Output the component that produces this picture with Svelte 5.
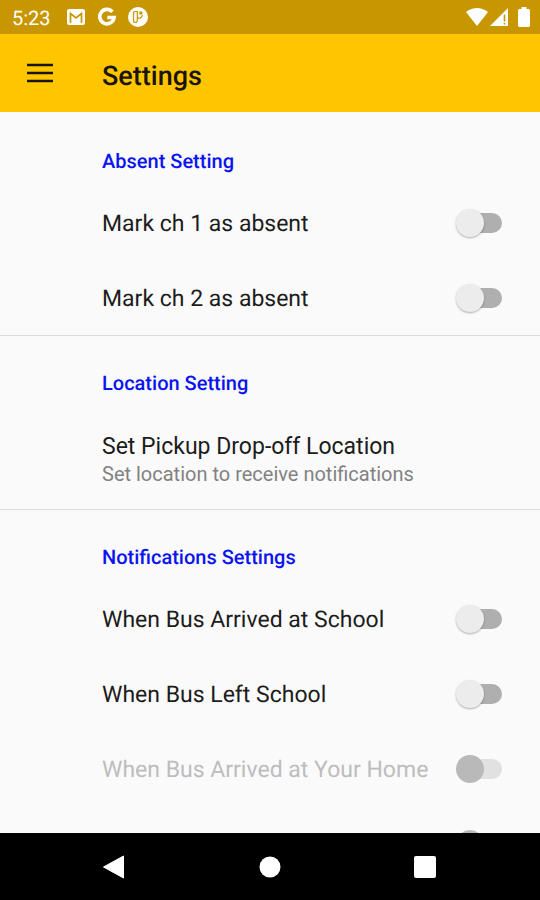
<script lang="ts">
  type Item = {
    id: string;
    label: string;
    hint?: string;
    toggle?: boolean;
    disabled?: boolean;
  };

  type Section = { title: string; items: Item[] };

  const sections: Section[] = [
    {
      title: 'Absent Setting',
      items: [
        { id: 'absent-1', label: 'Mark ch 1 as absent', toggle: true },
        { id: 'absent-2', label: 'Mark ch 2 as absent', toggle: true },
      ],
    },
    {
      title: 'Location Setting',
      items: [
        {
          id: 'location',
          label: 'Set Pickup Drop-off Location',
          hint: 'Set location to receive notifications',
        },
      ],
    },
    {
      title: 'Notifications Settings',
      items: [
        { id: 'school-arrived', label: 'When Bus Arrived at School', toggle: true },
        { id: 'school-left', label: 'When Bus Left School', toggle: true },
        { id: 'home-arrived', label: 'When Bus Arrived at Your Home', toggle: true, disabled: true },
        { id: 'home-left', label: 'When Bus Left Your Home', toggle: true, disabled: true },
      ],
    },
  ];

  let checked = $state<Record<string, boolean>>({});
</script>

<div class="screen">
  <div class="status">
    <span class="time">5:23</span>
    <div class="notices">
      <svg width="20" height="18" viewBox="0 0 20 18" aria-hidden="true">
        <rect x="1" y="1" width="18" height="16" rx="2" fill="#fff" />
        <path d="M4.5 15V5.5L10 9.8l5.500-4.300V15" fill="none" stroke="#c79600" stroke-width="1.700" />
      </svg>
      <svg width="20" height="20" viewBox="0 0 20 20" aria-hidden="true">
        <path d="M15.400 4.900A7.200 7.200 0 1 0 17.100 10.500H10.300" fill="none" stroke="#fff" stroke-width="3.600" />
      </svg>
      <svg width="20" height="20" viewBox="0 0 20 20" aria-hidden="true">
        <circle cx="10" cy="10" r="10" fill="#fff" />
        <path d="M5.500 13.500v-7q0-2 2-2h1.800v8.500q0 2.500-1.900 2.500t-1.900-2zM9.500 11.200h1.700a3.300 3.300 0 0 0 3.200-3.400" fill="none" stroke="#c79600" stroke-width="1.200" />
        <circle cx="12.800" cy="6" r="1.700" fill="#c79600" />
      </svg>
    </div>
    <div class="system">
      <svg width="22" height="18" viewBox="0 0 22 18" aria-hidden="true">
        <path d="M0 4Q11-4 22 4L11 18z" fill="#fff" />
      </svg>
      <svg width="18" height="18" viewBox="0 0 18 18" aria-hidden="true">
        <path d="M18 0v18H0z" fill="#fff" />
        <path d="M14.500 6.500v7M14.500 15v1.500" stroke="#c79600" stroke-width="1.600" />
      </svg>
      <svg class="battery" width="12" height="20" viewBox="0 0 12 20" aria-hidden="true">
        <path d="M3.500 0h5v2H11l1 1v16l-1 1H1l-1-1V3l1-1h2.500z" fill="#fff" />
      </svg>
    </div>
  </div>

  <header class="appbar">
    <button class="menu" type="button" aria-label="Open menu">
      <svg width="26" height="20" viewBox="0 0 26 20" aria-hidden="true">
        <path d="M0 2h26M0 10h26M0 18h26" stroke="#1a1400" stroke-width="2.400" />
      </svg>
    </button>
    <h1>Settings</h1>
  </header>

  <main>
    {#each sections as section}
      <section>
        <h2>{section.title}</h2>
        {#each section.items as item (item.id)}
          {#if item.toggle}
            <label class="row" class:disabled={item.disabled} for={item.id}>
              <span class="label">{item.label}</span>
              <input
                id={item.id}
                type="checkbox"
                role="switch"
                disabled={item.disabled}
                bind:checked={checked[item.id]}
              />
            </label>
          {:else}
            <button class="row link" type="button">
              <span class="label">{item.label}</span>
              <span class="hint">{item.hint}</span>
            </button>
          {/if}
        {/each}
      </section>
    {/each}
  </main>

  <nav>
    <button type="button" aria-label="Back">
      <svg width="24" height="24" viewBox="0 0 24 24" aria-hidden="true">
        <path d="M20.500 1v22L.5 12z" fill="#fff" stroke="#fff" stroke-linejoin="round" />
      </svg>
    </button>
    <button type="button" aria-label="Home">
      <svg width="24" height="24" viewBox="0 0 24 24" aria-hidden="true">
        <circle cx="12" cy="12" r="10.500" fill="#fff" />
      </svg>
    </button>
    <button type="button" aria-label="Recent apps">
      <svg width="24" height="24" viewBox="0 0 24 24" aria-hidden="true">
        <rect x="1" y="1" width="22" height="22" rx="2" fill="#fff" />
      </svg>
    </button>
  </nav>
</div>

<style>
  :global(body) {
    margin: 0;
    background: #fafafa;
  }

  .screen {
    display: flex;
    flex-direction: column;
    height: 100vh;
    font-family: Roboto, 'Liberation Sans', sans-serif;
    text-rendering: geometricPrecision;
    color: #1c1c1c;
    background: #fafafa;
  }

  button {
    padding: 0;
    border: 0;
    background: none;
    font: inherit;
    color: inherit;
    cursor: pointer;
  }

  svg {
    display: block;
  }

  .status {
    display: flex;
    align-items: center;
    flex-shrink: 0;
    height: 34px;
    padding: 0 10px 0 12px;
    background: #c79600;
    color: #fff;
  }

  .time {
    font-size: 20px;
    line-height: 24px;
    padding-top: 2px;
  }

  .notices {
    display: flex;
    align-items: center;
    gap: 11px;
    margin-left: 15px;
  }

  .system {
    display: flex;
    align-items: center;
    gap: 2px;
    margin-left: auto;
  }

  .battery {
    margin-left: 8px;
  }

  .appbar {
    display: flex;
    align-items: center;
    flex-shrink: 0;
    height: 78px;
    padding-left: 16px;
    background: #ffc600;
  }

  .menu {
    display: grid;
    place-items: center;
    width: 48px;
    height: 48px;
    margin-right: 38px;
  }

  h1 {
    margin: 0;
    padding-top: 6px;
    font-size: 27px;
    line-height: 32px;
    font-weight: 500;
    color: #1a1400;
  }

  main {
    flex: 1;
    min-height: 0;
    padding-top: 2px;
    overflow-y: auto;
    scrollbar-width: none;
  }

  section + section {
    border-top: 1px solid #dcdcdc;
  }

  h2 {
    margin: 0;
    padding: 35px 38px 12px 102px;
    font-size: 20px;
    line-height: 24px;
    font-weight: 500;
    color: #0a14f0;
  }

  .row {
    display: flex;
    align-items: center;
    justify-content: space-between;
    box-sizing: border-box;
    width: 100%;
    min-height: 75px;
    padding: 0 38px 0 102px;
  }

  .label {
    padding-top: 2px;
    font-size: 23px;
    line-height: 28px;
  }

  .link {
    flex-direction: column;
    align-items: flex-start;
    justify-content: flex-start;
    padding-top: 24px;
    padding-bottom: 22px;
    text-align: left;
  }

  .hint {
    font-size: 20px;
    line-height: 26px;
    color: #828282;
  }

  .disabled {
    color: #bdbdbd;
  }

  input {
    position: relative;
    display: flex;
    align-items: center;
    flex-shrink: 0;
    width: 46px;
    height: 28px;
    margin: 0;
    appearance: none;
  }

  /* track */
  input::before {
    content: '';
    width: 40px;
    height: 20px;
    margin-left: 6px;
    border-radius: 10px;
    background: #afafaf;
  }

  /* thumb */
  input::after {
    content: '';
    position: absolute;
    left: 0;
    width: 28px;
    height: 28px;
    border-radius: 50%;
    background: #ececec;
    box-shadow: 0 1px 2px rgba(0, 0, 0, 0.3);
  }

  input:checked::after {
    left: 18px;
    background: #ffc600;
  }

  input:disabled::before {
    background: #e1e1e1;
  }

  input:disabled::after {
    background: #b9b9b9;
    box-shadow: none;
  }

  nav {
    display: grid;
    grid-template-columns: repeat(3, 1fr);
    flex-shrink: 0;
    height: 67px;
    padding: 0 38px;
    background: #000;
  }

  nav button {
    display: grid;
    place-items: center;
  }
</style>
